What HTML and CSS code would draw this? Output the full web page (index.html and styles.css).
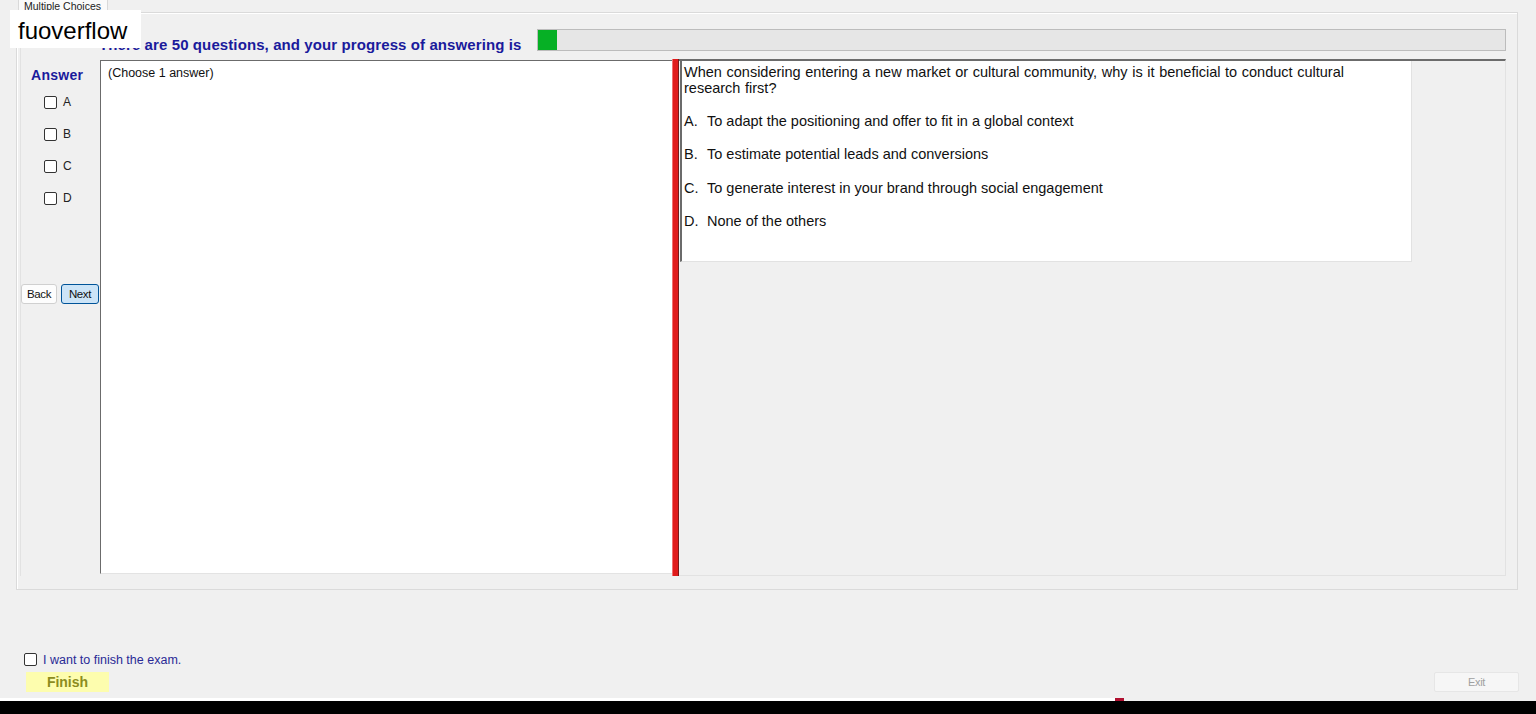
FILE: index.html
```html
<!DOCTYPE html>
<html lang="en">

<head>
    <meta charset="UTF-8">
    <meta name="viewport" content="width=device-width, initial-scale=1.0">
    <title>Multiple Choices</title>
    <link rel="stylesheet" href="styles.css">
</head>

<body>
    <div class="watermark">fuoverflow</div>

    <div class="tabstrip">
        <div class="tab">Multiple Choices</div>
    </div>

    <div class="tabpanel">
        <div class="group">
            <div class="header">
                <div class="title">There are 50 questions, and your progress of answering is</div>
                <div class="progress">
                    <div class="progress-fill" style="width: 2%"></div>
                </div>
            </div>

            <div class="main">
                <div class="answer-col">
                    <div class="answer-title">Answer</div>
                    <ul class="choices">
                        <li><span class="box"></span>A</li>
                        <li><span class="box"></span>B</li>
                        <li><span class="box"></span>C</li>
                        <li><span class="box"></span>D</li>
                    </ul>
                    <div class="nav">
                        <button class="btn">Back</button>
                        <button class="btn btn-next">Next</button>
                    </div>
                </div>

                <div class="content">
                    <div class="memo">(Choose 1 answer)</div>
                    <div class="splitter"></div>
                    <div class="right-pane">
                        <div class="question">
                            <p class="q-text">When considering entering a new market or cultural community, why is it beneficial to conduct cultural<br>research first?</p>
                            <p class="option"><span class="letter">A.</span>To adapt the positioning and offer to fit in a global context</p>
                            <p class="option"><span class="letter">B.</span>To estimate potential leads and conversions</p>
                            <p class="option"><span class="letter">C.</span>To generate interest in your brand through social engagement</p>
                            <p class="option"><span class="letter">D.</span>None of the others</p>
                        </div>
                    </div>
                </div>
            </div>
        </div>
    </div>

    <div class="footer">
        <div class="finish-check"><span class="box"></span>I want to finish the exam.</div>
        <div class="footer-buttons">
            <button class="btn-finish">Finish</button>
            <button class="btn-exit">Exit</button>
        </div>
    </div>

    <div class="taskbar">
        <div class="strip"><span class="strip-line"></span><span class="strip-mark"></span></div>
        <div class="black"></div>
    </div>
</body>

</html>
```

FILE: styles.css
```css
* {
    padding: 0;
    margin: 0;
    list-style: none;
    box-sizing: border-box;
}

body {
    width: 1536px;
    height: 714px;
    overflow: hidden;
    background: #f0f0f0;
    font-family: "Liberation Sans", Arial, sans-serif;
    color: #111;
    position: relative;
}

.watermark {
    position: absolute;
    left: 10px;
    top: 10px;
    width: 131px;
    height: 38px;
    background: #fff;
    font-size: 24px;
    line-height: 38px;
    padding: 2px 0 0 8px;
    color: #000;
}

/* tab header */
.tabstrip {
    height: 12px;
    padding-left: 18px;
    display: flex;
}

.tab {
    width: 90px;
    height: 12px;
    background: #fafafa;
    border-left: 1px solid #d9d9d9;
    border-right: 1px solid #d9d9d9;
    font-size: 10.5px;
    line-height: 13px;
    padding-left: 5px;
    color: #222;
    overflow: hidden;
}

.tabpanel {
    margin-left: 16px;
    width: 1502px;
    height: 578px;
    border: 1px solid #dadada;
    box-shadow: inset 1px 1px 0 #fff;
    padding: 0 11px 13px 3px;
}

.group {
    height: 100%;
    border-left: 1px solid #e2e2e2;
    display: flex;
    flex-direction: column;
}

.header {
    height: 46px;
    padding-top: 16px;
    display: flex;
    align-items: flex-end;
    padding-bottom: 8px;
}

.title {
    width: 438px;
    margin-left: 78px;
    font-size: 15px;
    font-weight: bold;
    line-height: 16px;
    letter-spacing: 0.1px;
    color: #1a1a9c;
    white-space: nowrap;
    margin-bottom: -2px;
}

.progress {
    flex: 1;
    height: 22px;
    border: 1px solid #bcbcbc;
    background: #e6e6e6;
}

.progress-fill {
    height: 100%;
    background: #06b025;
}

.main {
    flex: 1;
    display: flex;
}

/* answer column */
.answer-col {
    width: 79px;
    padding-top: 8px;
}

.answer-title {
    padding-left: 10px;
    font-size: 14px;
    font-weight: bold;
    line-height: 16px;
    letter-spacing: 0.3px;
    color: #1a1a9c;
}

.choices {
    margin-top: 3px;
}

.choices li {
    height: 32px;
    display: flex;
    align-items: center;
    padding-left: 23px;
    font-size: 12px;
    color: #222;
}

.box {
    width: 13px;
    height: 13px;
    border: 1px solid #333;
    border-radius: 2px;
    background: #fff;
    margin-right: 6px;
    flex: none;
}

.nav {
    margin-top: 70px;
    display: flex;
    gap: 4px;
}

.btn {
    height: 20px;
    width: 36px;
    font-family: "Liberation Sans", Arial, sans-serif;
    font-size: 11.5px;
    color: #111;
    background: #fdfdfd;
    border: 1px solid #d0d0d0;
    border-radius: 3px;
    letter-spacing: -0.4px;
}

.btn-next {
    width: 38px;
    background: #cce4f7;
    border-color: #005499;
}

/* content */
.content {
    flex: 1;
    display: flex;
}

.memo {
    width: 572px;
    height: 514px;
    margin-top: 1px;
    background: #fff;
    border-top: 1px solid #6b6b6b;
    border-left: 1px solid #6b6b6b;
    border-bottom: 1px solid #e3e3e3;
    padding: 5px 0 0 7px;
    font-size: 12.5px;
    line-height: 14px;
}

.splitter {
    width: 7px;
    background: #e01b1b;
    border-left: 1px solid #f07070;
    border-right: 1px solid #7a1818;
}

.right-pane {
    flex: 1;
    border-top: 2px solid #6b6b6b;
    border-right: 1px solid #e2e2e2;
    border-bottom: 1px solid #e2e2e2;
    padding-left: 1px;
}

.question {
    width: 732px;
    height: 201px;
    background: #fff;
    border-left: 2px solid #6b6b6b;
    border-right: 1px solid #e2e2e2;
    border-bottom: 1px solid #e2e2e2;
    padding: 3px 0 0 2px;
    font-size: 14.5px;
    line-height: 16px;
    color: #111;
}

.q-text {
    white-space: nowrap;
    word-spacing: 0.6px;
    margin-bottom: 17px;
}

.option {
    margin-bottom: 17.4px;
    white-space: nowrap;
}

.letter {
    display: inline-block;
    width: 23px;
}

/* footer */
.footer {
    height: 108px;
    padding-top: 62px;
}

.finish-check {
    height: 15px;
    padding-left: 24px;
    display: flex;
    align-items: center;
    font-size: 12.5px;
    color: #2a2a96;
}

.footer-buttons {
    margin-top: 5px;
    display: flex;
    padding-left: 26px;
    padding-right: 17px;
}

.btn-finish {
    width: 83px;
    height: 20px;
    background: #fdfdae;
    border: 0;
    font-family: "Liberation Sans", Arial, sans-serif;
    font-size: 14px;
    font-weight: bold;
    color: #8c8c1e;
}

.btn-exit {
    margin-left: auto;
    width: 85px;
    height: 20px;
    background: #f6f6f6;
    border: 1px solid #e6e6e6;
    border-radius: 2px;
    font-family: "Liberation Sans", Arial, sans-serif;
    font-size: 11px;
    letter-spacing: -0.3px;
    color: #a0a0a0;
}

.taskbar .strip {
    height: 3px;
    display: flex;
}

.strip-line {
    width: 1115px;
    background: #fff;
}

.strip-mark {
    width: 9px;
    background: #b01030;
}

.taskbar .black {
    height: 13px;
    background: #000;
}
```
